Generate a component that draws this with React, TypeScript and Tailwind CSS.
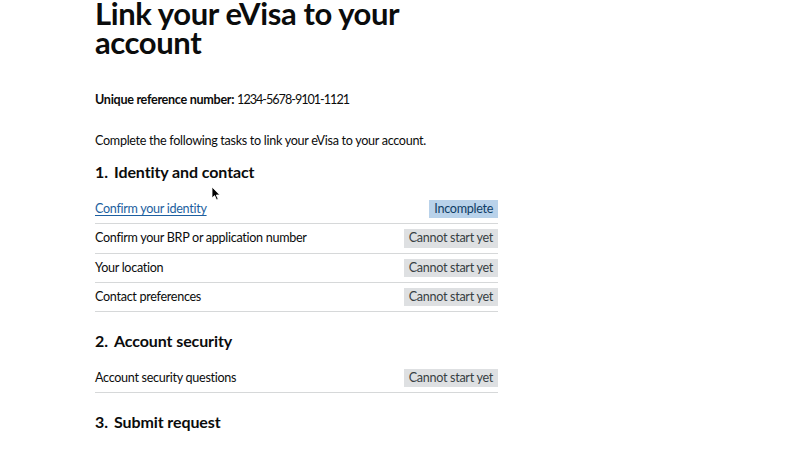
import React from 'react'

type Task = {
  label: string
  status: 'incomplete' | 'cannot'
  link?: boolean
}

const sections: { title: string; tasks: Task[] }[] = [
  {
    title: 'Identity and contact',
    tasks: [
      { label: 'Confirm your identity', status: 'incomplete', link: true },
      { label: 'Confirm your BRP or application number', status: 'cannot' },
      { label: 'Your location', status: 'cannot' },
      { label: 'Contact preferences', status: 'cannot' },
    ],
  },
  {
    title: 'Account security',
    tasks: [{ label: 'Account security questions', status: 'cannot' }],
  },
  {
    title: 'Submit request',
    tasks: [{ label: 'Check your answers and submit', status: 'cannot' }],
  },
]

const Tag = ({ status }: { status: Task['status'] }) =>
  status === 'incomplete' ? (
    <span className="h-[18.3px] px-[5px] flex items-center bg-[#b9d2ea] text-[#0f3d66]">Incomplete</span>
  ) : (
    <span className="h-[18.3px] px-[5px] flex items-center bg-[#dee0e2] text-[#383f43]">Cannot start yet</span>
  )

const Cursor = () => (
  <svg className="absolute left-[211px] top-[186px]" width="10" height="15" viewBox="0 0 10 15">
    <path d="M1 1 L1 12 L3.6 9.6 L5.6 14 L7.2 13.3 L5.3 9 L8.8 9 Z" fill="#000" stroke="#fff" strokeWidth="0.8" />
  </svg>
)

export default function App() {
  return (
    <div className="relative w-[800px] h-[450px] overflow-hidden bg-white text-[#0b0c0c] font-['Lato',Arial,sans-serif]">
      <div className="w-[403px] ml-[95px]">
        <h1 className="text-[31px] leading-[29px] font-bold tracking-[-0.4px] mt-[-1px]">Link your eVisa to your account</h1>

        <p className="mt-[33px] text-[12.6px] leading-[20px] tracking-[-0.3px]">
          <span className="font-bold">Unique reference number:</span>{' '}
          <span className="tracking-[-1px]">1234-5678-9101-1121</span>
        </p>

        <p className="mt-[21px] text-[12.6px] leading-[20px] tracking-[-0.3px]">
          Complete the following tasks to link your eVisa to your account.
        </p>

        {sections.map((section, i) => (
          <div key={section.title} className={i === 0 ? 'mt-[11px]' : 'mt-[19px]'}>
            <h2 className="text-[16px] leading-[20px] font-bold tracking-[-0.1px] flex">
              <span className="w-[19px]">{i + 1}.</span>
              {section.title}
            </h2>
            <ul className="mt-[13px]">
              {section.tasks.map((task) => (
                <li
                  key={task.label}
                  className="flex items-center justify-between py-[5px] border-b border-[#d6d8d9] text-[12.6px] leading-[18px] tracking-[-0.3px]"
                >
                  {task.link ? (
                    <a href="#" className="text-[#1d5fa0] underline underline-offset-2 decoration-1">{task.label}</a>
                  ) : (
                    <span>{task.label}</span>
                  )}
                  <Tag status={task.status} />
                </li>
              ))}
            </ul>
          </div>
        ))}
      </div>
      <Cursor />
    </div>
  )
}
